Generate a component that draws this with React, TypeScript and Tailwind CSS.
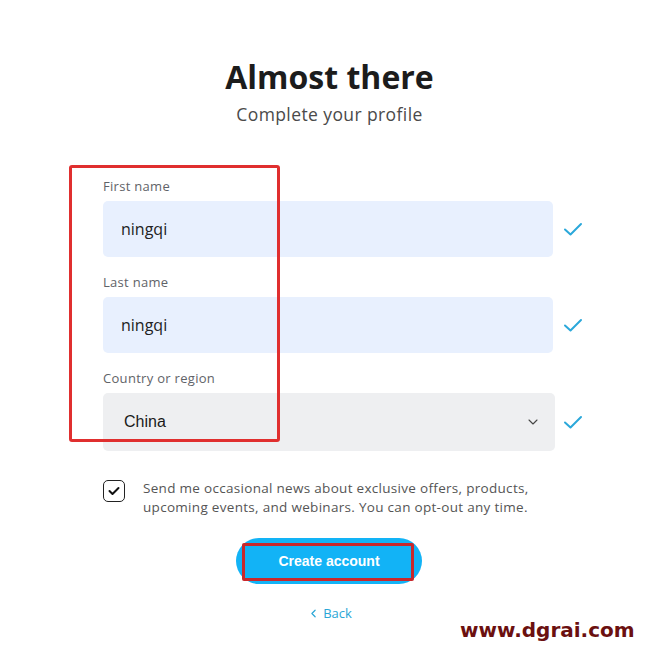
import { ChevronDown, ChevronLeft } from "lucide-react";

const poppins = { fontFamily: '"Open Sans", "Noto Sans", sans-serif' };

function Tick() {
  return (
    <svg width="20" height="16" viewBox="0 0 20 16" fill="none" className="shrink-0">
      <path d="M2 8.5 L7.5 13.5 L18 3" stroke="#2ba8da" strokeWidth="2" strokeLinecap="round" strokeLinejoin="round" />
    </svg>
  );
}

function Field({ label, value }: { label: string; value: string }) {
  return (
    <div>
      <div className="h-[24px] text-[13px] leading-[18px] tracking-[0.3px] text-[#5f6368]">{label}</div>
      <div className="flex items-center">
        <div className="flex h-[56px] w-[450px] items-center rounded-[5px] bg-[#e8f0fe] pl-[18px] text-[16px] text-[#222]">
          {value}
        </div>
        <div className="ml-[10px]">
          <Tick />
        </div>
      </div>
    </div>
  );
}

export default function App() {
  return (
    <div className="relative min-h-[665px] w-full bg-white" style={poppins}>
      <div className="flex flex-col items-center pt-[56px]">
        <h1 className="text-[32px] font-bold leading-[42px] text-[#1c1c1c]">Almost there</h1>
        <p className="mt-[5px] text-[17.5px] leading-[22px] tracking-[0.4px] text-[#4a4a4a]">Complete your profile</p>
      </div>

      <div className="relative mt-[52px] pl-[103px]">
        <div className="flex flex-col gap-[16px]">
          <Field label="First name" value="ningqi" />
          <Field label="Last name" value="ningqi" />
          <div>
            <div className="h-[24px] text-[13px] leading-[18px] tracking-[0.3px] text-[#5f6368]">Country or region</div>
            <div className="flex items-center">
              <div
                className="flex h-[58px] w-[452px] items-center justify-between rounded-[5px] bg-[#eeeff1] pl-[21px] pr-[14px] text-[16px] text-[#1a1a1a]"
                style={{ fontFamily: '"Liberation Sans", Arial, sans-serif' }}
              >
                <span>China</span>
                <ChevronDown size={16} strokeWidth={1.6} color="#444" />
              </div>
              <div className="ml-[8px]">
                <Tick />
              </div>
            </div>
          </div>
        </div>
        <div className="pointer-events-none absolute left-[69px] top-[-12px] h-[277px] w-[211px] rounded-[3px] border-[3px] border-[#e02f2f]" />
      </div>

      <div className="mt-[28px] flex items-start pl-[103px]">
        <div className="mt-[1px] flex h-[22px] w-[22px] shrink-0 items-center justify-center rounded-[5px] border-[1.5px] border-[#222]">
          <svg width="12" height="10" viewBox="0 0 12 10" fill="none">
            <path d="M1.5 5 L4.5 8 L10.5 2" stroke="#111" strokeWidth="2" strokeLinecap="round" strokeLinejoin="round" />
          </svg>
        </div>
        <p className="ml-[18px] w-[400px] text-[13.5px] leading-[19px] tracking-[0.3px] text-[#555]">
          Send me occasional news about exclusive offers, products, upcoming events, and webinars. You can opt-out any time.
        </p>
      </div>

      <div className="mt-[21px] flex justify-center">
        <div className="relative ml-[-1px]">
          <button
            type="button"
            className="flex h-[46px] w-[186px] items-center justify-center rounded-full bg-[#12b3f6] text-[14px] font-bold text-white"
            style={{ fontFamily: '"Liberation Sans", Arial, sans-serif' }}
          >
            Create account
          </button>
          <div className="pointer-events-none absolute left-[6px] top-[5px] h-[38px] w-[172px] rounded-[2px] border-[3px] border-[#c8282c]" />
        </div>
      </div>

      <div className="mt-[20px] flex items-center justify-center text-[13px] text-[#2aa6d6]">
        <ChevronLeft size={13} strokeWidth={2.2} />
        <span className="ml-[3px]">Back</span>
      </div>

      <div
        className="absolute left-[460px] top-[615px] text-[20px] font-bold text-[#6b1010]"
        style={{ fontFamily: '"DejaVu Sans", sans-serif' }}
      >
        www.dgrai.com
      </div>
    </div>
  );
}
